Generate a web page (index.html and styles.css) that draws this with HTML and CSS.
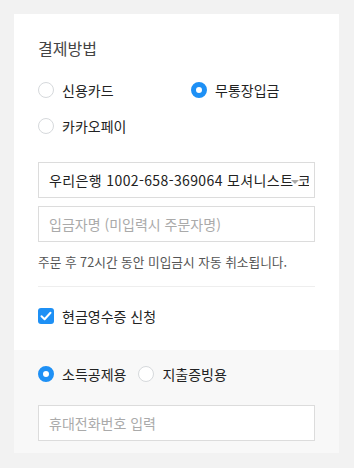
FILE: index.html
```html
<!DOCTYPE html>
<html lang="ko">
	<head>
		<meta charset="UTF-8" />
		<meta name="viewport" content="width=device-width, initial-scale=1.0" />
		<title>결제방법</title>
		<link rel="stylesheet" href="styles.css">
	</head>
	<body>
		<div class="card">
			<section class="payment">
				<h2 class="title">결제방법</h2>
				<div class="method-grid">
					<label class="radio"><span class="dot"></span>신용카드</label>
					<label class="radio"><span class="dot checked"></span>무통장입금</label>
					<label class="radio"><span class="dot"></span>카카오페이</label>
				</div>

				<div class="field select">
					<span class="select-text">우리은행 1002-658-369064 모셔니스트 코리아</span>
					<span class="arrow"></span>
				</div>
				<div class="field placeholder">입금자명 (미입력시 주문자명)</div>
				<p class="note">주문 후 72시간 동안 미입금시 자동 취소됩니다.</p>

				<hr class="divider" />

				<label class="check">
					<span class="box">
						<svg width="12" height="10" viewBox="0 0 12 10"><path d="M1.5 5.2 L4.6 8.2 L10.5 1.8" fill="none" stroke="#fff" stroke-width="2" stroke-linecap="round" stroke-linejoin="round"/></svg>
					</span>
					현금영수증 신청
				</label>
			</section>

			<section class="receipt">
				<div class="receipt-types">
					<label class="radio"><span class="dot checked"></span>소득공제용</label>
					<label class="radio"><span class="dot"></span>지출증빙용</label>
				</div>
				<div class="field placeholder">휴대전화번호 입력</div>
			</section>
		</div>
	</body>
</html>
```

FILE: styles.css
```css
body {
	font-family: "Noto Sans CJK KR", "Noto Sans", sans-serif;
	margin: 0;
	padding: 14px 15px 14px 14px;
	background-color: #f2f2f2;
	color: #333;
}

.card {
	background-color: #fff;
}

.payment {
	padding: 22px 24px 22px 24px;
}

.title {
	margin: 0 0 18px;
	font-size: 16px;
	font-weight: normal;
	line-height: 24px;
	color: #444;
}

.method-grid {
	display: grid;
	grid-template-columns: 153px 1fr;
	row-gap: 12px;
	margin-bottom: 24px;
}

.radio {
	display: flex;
	align-items: center;
	gap: 8px;
	font-size: 14px;
	line-height: 24px;
	color: #222;
}

.dot {
	width: 16px;
	height: 16px;
	box-sizing: border-box;
	border: 1px solid #d6d9dc;
	border-radius: 50%;
	background-color: #fff;
}

.dot.checked {
	border: 5px solid #1e90f5;
	background-color: #fff;
}

.field {
	height: 36px;
	box-sizing: border-box;
	border: 1px solid #dcdcdc;
	padding: 0 10px;
	display: flex;
	align-items: center;
	font-size: 14px;
	background-color: #fff;
}

.select {
	position: relative;
	white-space: nowrap;
	margin-bottom: 8px;
	padding-right: 5px;
	color: #222;
}

.select-text {
	flex: 1;
	min-width: 0;
	overflow: hidden;
	letter-spacing: 0.38px;
}

.arrow {
	position: absolute;
	right: 15px;
	top: 17px;
	width: 0;
	height: 0;
	border-left: 4px solid transparent;
	border-right: 4px solid transparent;
	border-top: 4px solid #aaa;
}

.placeholder {
	color: #aaa;
}

.note {
	margin: 11px 0 0;
	font-size: 12.7px;
	line-height: 18px;
	color: #555;
}

.divider {
	border: none;
	border-top: 1px solid #eee;
	margin: 15px 0 17px;
}

.check {
	display: flex;
	align-items: center;
	gap: 8px;
	font-size: 14px;
	line-height: 24px;
	color: #222;
}

.box {
	width: 16px;
	height: 16px;
	border-radius: 3px;
	background-color: #1e90f5;
	display: flex;
	align-items: center;
	justify-content: center;
}

.receipt {
	background-color: #f8f8f8;
	padding: 12px 24px 12px 24px;
}

.receipt-types {
	display: flex;
	gap: 12px;
	margin-bottom: 19px;
}
```
